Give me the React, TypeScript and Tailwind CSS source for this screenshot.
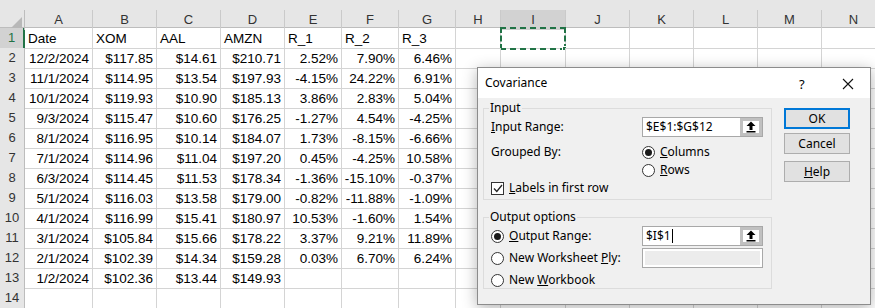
import React from 'react';

const COLS = ['A', 'B', 'C', 'D', 'E', 'F', 'G', 'H', 'I', 'J', 'K', 'L', 'M', 'N'];

const ROWS: string[][] = [
  ['Date', 'XOM', 'AAL', 'AMZN', 'R_1', 'R_2', 'R_3'],
  ['12/2/2024', '$117.85', '$14.61', '$210.71', '2.52%', '7.90%', '6.46%'],
  ['11/1/2024', '$114.95', '$13.54', '$197.93', '-4.15%', '24.22%', '6.91%'],
  ['10/1/2024', '$119.93', '$10.90', '$185.13', '3.86%', '2.83%', '5.04%'],
  ['9/3/2024', '$115.47', '$10.60', '$176.25', '-1.27%', '4.54%', '-4.25%'],
  ['8/1/2024', '$116.95', '$10.14', '$184.07', '1.73%', '-8.15%', '-6.66%'],
  ['7/1/2024', '$114.96', '$11.04', '$197.20', '0.45%', '-4.25%', '10.58%'],
  ['6/3/2024', '$114.45', '$11.53', '$178.34', '-1.36%', '-15.10%', '-0.37%'],
  ['5/1/2024', '$116.03', '$13.58', '$179.00', '-0.82%', '-11.88%', '-1.09%'],
  ['4/1/2024', '$116.99', '$15.41', '$180.97', '10.53%', '-1.60%', '1.54%'],
  ['3/1/2024', '$105.84', '$15.66', '$178.22', '3.37%', '9.21%', '11.89%'],
  ['2/1/2024', '$102.39', '$14.34', '$159.28', '0.03%', '6.70%', '6.24%'],
  ['1/2/2024', '$102.36', '$13.44', '$149.93'],
  [],
];

const grid =
  'grid grid-cols-[25px_68px_64px_64px_64px_57px_57px_57px_45px_65px_64px_64px_64px_64px_64px]';

function Sheet() {
  return (
    <div className="font-['Liberation_Sans',sans-serif] text-[13.5px] text-black">
      <div className="h-[10px] bg-[#e6e6e6]" />
      {/* column letters */}
      <div className={`${grid} h-[18px] bg-[#e6e6e6] border-b border-[#bdbdbd] text-[13px]`}>
        <div className="relative border-r border-[#bdbdbd]">
          <svg className="absolute right-[2px] bottom-[2px]" width="11" height="11" viewBox="0 0 11 11">
            <path d="M11 0 V11 H0 Z" fill="#b8b8b8" />
          </svg>
        </div>
        {COLS.map((c) => (
          <div
            key={c}
            className={`flex items-center justify-center border-r border-[#cacaca] text-[#333] ${
              c === 'I' ? 'bg-[#d2d2d2]' : ''
            }`}
          >
            {c}
          </div>
        ))}
      </div>
      {ROWS.map((row, r) => (
        <div key={r} className={`${grid} h-[20px]`}>
          <div
            className={`flex items-center justify-center border-b border-r text-[13px] ${
              r === 0
                ? 'bg-[#d2d2d2] text-[#217346] border-r-2 border-r-[#217346] border-b-[#bdbdbd]'
                : 'bg-[#e6e6e6] text-[#333] border-[#bdbdbd]'
            }`}
          >
            {r + 1}
          </div>
          {COLS.map((c, i) => {
            const v = row[i] ?? '';
            const left = r === 0;
            return (
              <div
                key={c}
                className={`relative flex items-end pb-[1px] px-[3px] leading-[16px] whitespace-nowrap border-b border-r border-[#d4d4d4] ${
                  left ? 'justify-start' : 'justify-end'
                }`}
              >
                {v}
                {r === 0 && c === 'I' && (
                  <div className="absolute -top-[1px] -left-[1px] -right-[1px] -bottom-[2px] border-2 border-dashed border-[#217346]">
                    <div className="absolute -right-[3px] -bottom-[3px] w-[5px] h-[5px] bg-[#217346] border border-white" />
                  </div>
                )}
              </div>
            );
          })}
        </div>
      ))}
    </div>
  );
}

function U({ children }: { children: React.ReactNode }) {
  return <span className="underline underline-offset-1">{children}</span>;
}

function Radio({ on }: { on?: boolean }) {
  return (
    <span className="flex items-center justify-center w-[13px] h-[13px] rounded-full border border-[#333] bg-white shrink-0">
      {on && <span className="w-[7px] h-[7px] rounded-full bg-[#1a1a1a]" />}
    </span>
  );
}

function RefField({ value, caret }: { value: string; caret?: boolean }) {
  return (
    <div className="flex w-[121px] h-[20px] border border-[#a8a8a8] bg-white">
      <div className="flex-1 flex items-center pl-[3px] text-[12px] text-black">
        {value}
        {caret && <span className="ml-[1px] w-px h-[14px] bg-black" />}
      </div>
      <div className="w-[22px] h-full border-[3px] border-[#c0c0c0] bg-white flex items-center justify-center">
        <svg width="10" height="12" viewBox="0 0 10 12">
          <path d="M5 0.5 L9.5 5 H6.5 V9 H3.5 V5 H0.5 Z" fill="#000" />
          <rect x="0.5" y="10" width="9" height="1.5" fill="#000" />
        </svg>
      </div>
    </div>
  );
}

function Btn({ children, primary }: { children: React.ReactNode; primary?: boolean }) {
  return (
    <div
      className={`w-[66px] h-[21px] flex items-center justify-center bg-[#e1e1e1] text-[12px] text-black ${
        primary ? 'border-2 border-[#0078d7]' : 'border border-[#adadad]'
      }`}
    >
      {children}
    </div>
  );
}

function Dialog() {
  return (
    <div className="absolute left-[477px] top-[67px] w-[394px] h-[238px] bg-[#f0f0f0] border border-[#8c8c8c] shadow-[0_3px_14px_rgba(0,0,0,0.3)] font-['Noto_Sans',sans-serif] text-[12px] text-black">
      <div className="h-[30px] bg-white flex items-center pl-[7px] relative">
        <span>Covariance</span>
        <span className="absolute left-[321px] top-[7px] text-[13px]">?</span>
        <svg className="absolute left-[364px] top-[10px]" width="12" height="12" viewBox="0 0 12 12">
          <path d="M1 1 L11 11 M11 1 L1 11" stroke="#111" strokeWidth="1.1" />
        </svg>
      </div>
      <div className="flex pl-[5px] pt-[2px]">
        <div className="w-[289px]">
          <fieldset className="border border-[#dcdcdc] px-[5px] pb-[2px]">
            <legend className="px-[1px] leading-[16px]">Input</legend>
            <div className="grid grid-cols-[153px_121px] mt-[1px] items-center">
              <div className="pl-[2px]">
                <U>I</U>nput Range:
              </div>
              <RefField value="$E$1:$G$12" />
            </div>
            <div className="grid grid-cols-[153px_121px] mt-[6px] h-[18px] items-center">
              <div className="pl-[2px]">Grouped By:</div>
              <div className="flex items-center gap-[5px]">
                <Radio on />
                <span>
                  <U>C</U>olumns
                </span>
              </div>
            </div>
            <div className="grid grid-cols-[153px_121px] h-[18px] items-center">
              <div />
              <div className="flex items-center gap-[5px]">
                <Radio />
                <span>
                  <U>R</U>ows
                </span>
              </div>
            </div>
            <div className="flex items-center gap-[5px] h-[18px] pl-[2px]">
              <span className="w-[13px] h-[13px] border border-[#333] bg-white flex items-center justify-center">
                <svg width="10" height="9" viewBox="0 0 10 9">
                  <path d="M1 4.5 L3.8 7.5 L9 1" fill="none" stroke="#222" strokeWidth="1.3" />
                </svg>
              </span>
              <span>
                <U>L</U>abels in first row
              </span>
            </div>
          </fieldset>
          <fieldset className="mt-[9px] border border-[#dcdcdc] px-[5px]">
            <legend className="px-[1px] leading-[16px]">Output options</legend>
            <div className="grid grid-cols-[153px_121px] mt-[1px] items-center">
              <div className="flex items-center gap-[5px] pl-[2px]">
                <Radio on />
                <span>
                  <U>O</U>utput Range:
                </span>
              </div>
              <RefField value="$I$1" caret />
            </div>
            <div className="grid grid-cols-[153px_121px] mt-[2px] items-center">
              <div className="flex items-center gap-[5px] pl-[2px]">
                <Radio />
                <span>
                  New Worksheet <U>P</U>ly:
                </span>
              </div>
              <div className="w-[121px] h-[20px] border border-[#a8a8a8] bg-white p-[2px]">
                <div className="w-full h-full bg-[#ececec]" />
              </div>
            </div>
            <div className="flex items-center gap-[5px] h-[16px] mt-[4px] pl-[2px]">
              <Radio />
              <span>
                New <U>W</U>orkbook
              </span>
            </div>
          </fieldset>
        </div>
        <div className="ml-[12px] mt-[8px] flex flex-col">
          <Btn primary>OK</Btn>
          <div className="mt-[4px]">
            <Btn>Cancel</Btn>
          </div>
          <div className="mt-[7px]">
            <Btn>
              <U>H</U>elp
            </Btn>
          </div>
        </div>
      </div>
    </div>
  );
}

export default function App() {
  return (
    <div className="relative w-[875px] h-[308px] overflow-hidden bg-white">
      <Sheet />
      <Dialog />
    </div>
  );
}
